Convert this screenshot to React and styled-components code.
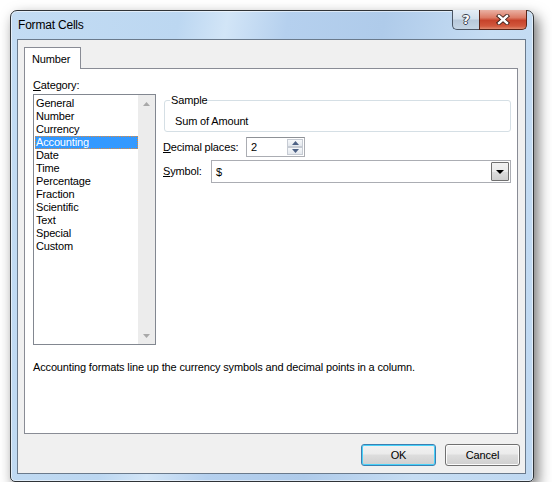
import React from "react";
import styled, { createGlobalStyle } from "styled-components";

const GlobalStyle = createGlobalStyle`
  html, body {
    margin: 0;
    padding: 0;
    background: #ffffff;
  }
  body {
    font-family: "Liberation Sans", Arial, sans-serif;
    font-size: 11px;
    letter-spacing: -0.15px;
    color: #000;
  }
`;

const categories = [
  "General",
  "Number",
  "Currency",
  "Accounting",
  "Date",
  "Time",
  "Percentage",
  "Fraction",
  "Scientific",
  "Text",
  "Special",
  "Custom"
];

export default function App() {
  return (
    <>
      <GlobalStyle />
      <Window>
        <TitleBar>
          <Title>Format Cells</Title>
          <CaptionButtons>
            <HelpButton>
              <GlyphText>?</GlyphText>
            </HelpButton>
            <CloseButton>
              <svg width="14" height="11" viewBox="0 0 14 11">
                <path
                  d="M3 2 L11 9 M11 2 L3 9"
                  stroke="#3a1d17"
                  strokeWidth="4.2"
                  strokeLinecap="square"
                />
                <path
                  d="M3 2 L11 9 M11 2 L3 9"
                  stroke="#ffffff"
                  strokeWidth="2.4"
                  strokeLinecap="square"
                />
              </svg>
            </CloseButton>
          </CaptionButtons>
        </TitleBar>

        <Client>
          <TabStrip>
            <Tab>Number</Tab>
          </TabStrip>
          <Panel>
            <Columns>
              <LeftColumn>
                <FieldLabel>
                  <u>C</u>ategory:
                </FieldLabel>
                <ListBox>
                  <ListItems>
                    {categories.map((c) => (
                      <ListItem key={c} selected={c === "Accounting"}>
                        {c}
                      </ListItem>
                    ))}
                  </ListItems>
                  <ScrollTrack>
                    <ScrollArrow>
                      <svg width="7" height="4" viewBox="0 0 7 4">
                        <path d="M0 4 L3.5 0 L7 4 Z" fill="#a8a8a8" />
                      </svg>
                    </ScrollArrow>
                    <ScrollArrow>
                      <svg width="7" height="4" viewBox="0 0 7 4">
                        <path d="M0 0 L3.5 4 L7 0 Z" fill="#a8a8a8" />
                      </svg>
                    </ScrollArrow>
                  </ScrollTrack>
                </ListBox>
              </LeftColumn>

              <RightColumn>
                <GroupBox>
                  <Legend>Sample</Legend>
                  <SampleText>Sum of Amount</SampleText>
                </GroupBox>

                <FormRow gap={5}>
                  <RowLabel width={83}>
                    <u>D</u>ecimal places:
                  </RowLabel>
                  <SpinBox>
                    <SpinValue>2</SpinValue>
                    <SpinButtons>
                      <SpinButton>
                        <svg width="7" height="4" viewBox="0 0 7 4">
                          <path d="M0 4 L3.5 0 L7 4 Z" fill="#4d6185" />
                        </svg>
                      </SpinButton>
                      <SpinButton>
                        <svg width="7" height="4" viewBox="0 0 7 4">
                          <path d="M0 0 L3.5 4 L7 0 Z" fill="#4d6185" />
                        </svg>
                      </SpinButton>
                    </SpinButtons>
                  </SpinBox>
                </FormRow>

                <FormRow gap={3}>
                  <RowLabel width={48}>
                    <u>S</u>ymbol:
                  </RowLabel>
                  <Select>
                    <SelectValue>$</SelectValue>
                    <DropButton>
                      <svg width="8" height="4" viewBox="0 0 8 4">
                        <path d="M0 0 L8 0 L4 4 Z" fill="#000" />
                      </svg>
                    </DropButton>
                  </Select>
                </FormRow>
              </RightColumn>
            </Columns>

            <Description>
              Accounting formats line up the currency symbols and decimal points
              in a column.
            </Description>
          </Panel>

          <ButtonRow>
            <DialogButton primary>OK</DialogButton>
            <DialogButton>Cancel</DialogButton>
          </ButtonRow>
        </Client>
      </Window>
    </>
  );
}

const Window = styled.div`
  box-sizing: border-box;
  margin: 10px 0 0 10px;
  width: 524px;
  height: 472px;
  border: 1px solid #2f3337;
  border-radius: 7px 7px 5px 5px;
  background: linear-gradient(
    100deg,
    #c3dcf3 0%,
    #bcd7f1 28%,
    #d2e5f7 36%,
    #b5d0ee 46%,
    #afcbea 62%,
    #c6ddf3 80%,
    #bfd8f1 100%
  );
  box-shadow: 4px 6px 14px rgba(0, 0, 0, 0.55),
    inset 0 0 0 1px rgba(255, 255, 255, 0.55);
  padding: 0 7px 7px 6px;
  display: flex;
  flex-direction: column;
`;

const TitleBar = styled.div`
  height: 28px;
  display: flex;
  justify-content: space-between;
  align-items: flex-start;
`;

const Title = styled.div`
  font-size: 12px;
  letter-spacing: -0.2px;
  padding: 7px 0 0 1px;
  color: #000;
`;

const CaptionButtons = styled.div`
  display: flex;
  margin-top: -1px;
  margin-right: -1px;
`;

const CaptionButton = styled.div`
  height: 20px;
  box-sizing: border-box;
  border: 1px solid #4a5564;
  border-top: none;
  display: flex;
  align-items: center;
  justify-content: center;
`;

const HelpButton = styled(CaptionButton)`
  width: 27px;
  border-radius: 0 0 0 5px;
  border-right: none;
  background: linear-gradient(
    #e4edf6 0%,
    #d2dfec 45%,
    #b7c8da 55%,
    #c5d5e5 100%
  );
`;

const GlyphText = styled.span`
  font-family: "DejaVu Sans", sans-serif;
  font-weight: bold;
  font-size: 13px;
  color: #fff;
  text-shadow: 1px 0 0 #3a4350, -1px 0 0 #3a4350, 0 1px 0 #3a4350,
    0 -1px 0 #3a4350;
  line-height: 1;
`;

const CloseButton = styled(CaptionButton)`
  width: 48px;
  border-radius: 0 0 5px 0;
  border-color: #5a2418;
  background: linear-gradient(
    #eab1a4 0%,
    #dc7b66 40%,
    #c7432b 55%,
    #d2583d 85%,
    #e08a70 100%
  );
`;

const Client = styled.div`
  flex: 1;
  box-sizing: border-box;
  border: 1px solid #6a7a8c;
  background: #f0f0f0;
  padding: 7px 5px 0 6px;
  display: flex;
  flex-direction: column;
`;

const TabStrip = styled.div`
  display: flex;
  position: relative;
  z-index: 1;
`;

const Tab = styled.div`
  box-sizing: border-box;
  width: 57px;
  height: 22px;
  margin-bottom: -1px;
  border: 1px solid #898c95;
  border-bottom: none;
  background: #fff;
  padding: 5px 0 0 7px;
`;

const Panel = styled.div`
  box-sizing: border-box;
  width: 494px;
  height: 366px;
  border: 1px solid #898c95;
  background: #fff;
  padding: 10px 6px 0 8px;
  display: flex;
  flex-direction: column;
`;

const Columns = styled.div`
  display: grid;
  grid-template-columns: 130px 1fr;
  align-items: start;
`;

const LeftColumn = styled.div`
  display: flex;
  flex-direction: column;
`;

const FieldLabel = styled.div`
  height: 13px;
  line-height: 13px;
  margin-bottom: 2px;
`;

const ListBox = styled.div`
  box-sizing: border-box;
  width: 123px;
  height: 251px;
  border: 1px solid #828790;
  display: flex;
`;

const ListItems = styled.div`
  flex: 1;
  padding: 2px 0 0 1px;
`;

const ListItem = styled.div`
  height: 13px;
  line-height: 13px;
  padding-left: 1px;
  box-sizing: border-box;
  background: ${(p) => (p.selected ? "#3399ff" : "transparent")};
  color: ${(p) => (p.selected ? "#fff" : "#000")};
  outline: ${(p) => (p.selected ? "1px dotted #e08a3c" : "none")};
  outline-offset: -1px;
`;

const ScrollTrack = styled.div`
  width: 17px;
  background: #ececec;
  display: flex;
  flex-direction: column;
  justify-content: space-between;
`;

const ScrollArrow = styled.div`
  height: 17px;
  display: flex;
  align-items: center;
  justify-content: center;
`;

const RightColumn = styled.div`
  display: flex;
  flex-direction: column;
`;

const GroupBox = styled.div`
  position: relative;
  margin: 21px 0 0 1px;
  height: 32px;
  box-sizing: border-box;
  border: 1px solid #d5dfe5;
  border-radius: 3px;
  padding: 14px 0 0 10px;
`;

const Legend = styled.span`
  position: absolute;
  top: -7px;
  left: 5px;
  padding: 0 1px;
  background: #fff;
  line-height: 13px;
`;

const SampleText = styled.div`
  line-height: 13px;
`;

const FormRow = styled.div`
  display: flex;
  align-items: center;
  margin-top: ${(p) => p.gap}px;
`;

const RowLabel = styled.div`
  width: ${(p) => p.width}px;
  line-height: 13px;
`;

const SpinBox = styled.div`
  box-sizing: border-box;
  width: 59px;
  height: 20px;
  border: 1px solid #abadb3;
  border-top-color: #8e9196;
  display: flex;
  align-items: center;
  justify-content: space-between;
  padding: 0 1px 0 4px;
`;

const SpinValue = styled.span``;

const SpinButtons = styled.div`
  display: flex;
  flex-direction: column;
  width: 16px;
  height: 16px;
`;

const SpinButton = styled.div`
  flex: 1;
  box-sizing: border-box;
  border: 1px solid #c6cbd3;
  background: linear-gradient(#f6f8fa, #e4e8ee);
  display: flex;
  align-items: center;
  justify-content: center;
`;

const Select = styled.div`
  box-sizing: border-box;
  flex: 1;
  height: 23px;
  border: 1px solid #abadb3;
  display: flex;
  align-items: center;
  justify-content: space-between;
  padding: 0 1px 0 4px;
`;

const SelectValue = styled.span``;

const DropButton = styled.div`
  box-sizing: border-box;
  width: 18px;
  height: 19px;
  border: 1px solid #707070;
  border-radius: 1px;
  background: linear-gradient(#f2f2f2 0%, #ebebeb 50%, #dddddd 51%, #cfcfcf 100%);
  display: flex;
  align-items: center;
  justify-content: center;
`;

const Description = styled.div`
  margin-top: 16px;
  line-height: 13px;
`;

const ButtonRow = styled.div`
  display: flex;
  justify-content: flex-end;
  gap: 9px;
  margin-top: 10px;
`;

const DialogButton = styled.div`
  box-sizing: border-box;
  width: 75px;
  height: 22px;
  border-radius: 3px;
  border: 1px solid ${(p) => (p.primary ? "#3c7fb1" : "#707070")};
  box-shadow: ${(p) =>
    p.primary ? "inset 0 0 0 1px #48d1f9" : "inset 0 0 0 1px #fcfcfc"};
  background: linear-gradient(
    #f2f2f2 0%,
    #ebebeb 45%,
    #dddddd 50%,
    #cfcfcf 100%
  );
  display: flex;
  align-items: center;
  justify-content: center;
`;
